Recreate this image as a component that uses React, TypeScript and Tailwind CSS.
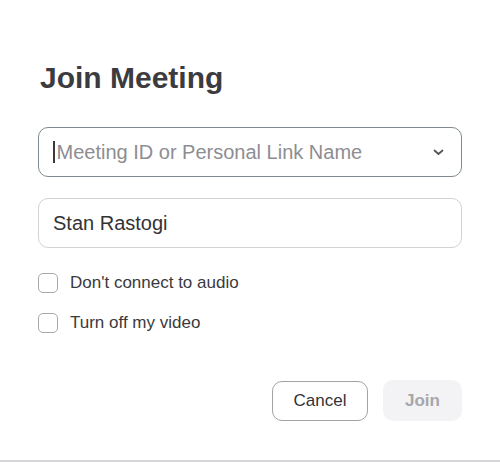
import React from "react";

function Checkbox({ label }: { label: string }) {
  return (
    <div className="flex items-center h-[20px]">
      <div className="w-[20px] h-[20px] rounded-[5px] border-[1.5px] border-[#a9a9ad] bg-white" />
      <span className="ml-[12px] text-[17px] leading-[20px] text-[#3a3a3d]">{label}</span>
    </div>
  );
}

export default function App() {
  return (
    <div
      className="w-[500px] h-[462px] bg-white flex flex-col pl-[38px] pr-[38px] border-b-[2px] border-[#d6d6d8]"
      style={{ fontFamily: '"Liberation Sans", Arial, sans-serif' }}
    >
      <h1 className="mt-[60px] ml-[2px] text-[30px] leading-[36px] font-bold text-[#3b3b40]">Join Meeting</h1>

      <div className="mt-[31px] h-[50px] rounded-[10px] border-[1.5px] border-[#808a90] flex items-center pl-[14px] pr-[17px]">
        <span className="w-[1.5px] h-[22px] bg-[#3a3a3a] mr-[2px]" />
        <span className="flex-1 text-[20px] leading-[24px] text-[#8d8d92]">Meeting ID or Personal Link Name</span>
        <svg width="11" height="7" viewBox="0 0 11 7" fill="none">
          <path d="M1.5 1.5 L5.5 5 L9.5 1.5" stroke="#555" strokeWidth="1.8" strokeLinecap="round" strokeLinejoin="round" />
        </svg>
      </div>

      <div className="mt-[21px] h-[50px] rounded-[10px] border border-[#d3d3d6] flex items-center pl-[14px]">
        <span className="text-[20px] leading-[24px] text-[#333336]">Stan Rastogi</span>
      </div>

      <div className="mt-[25px] flex flex-col gap-[20px]">
        <Checkbox label="Don't connect to audio" />
        <Checkbox label="Turn off my video" />
      </div>

      <div className="mt-[48px] flex justify-end gap-[15px]">
        <div className="w-[96px] h-[40px] rounded-[10px] border-[1.5px] border-[#a3a3a6] flex items-center justify-center text-[17px] text-[#333336]">
          Cancel
        </div>
        <div className="w-[79px] h-[41px] -mt-[1px] rounded-[10px] bg-[#f3f3f5] flex items-center justify-center text-[17px] font-bold text-[#a6a6ab]">
          Join
        </div>
      </div>
    </div>
  );
}
